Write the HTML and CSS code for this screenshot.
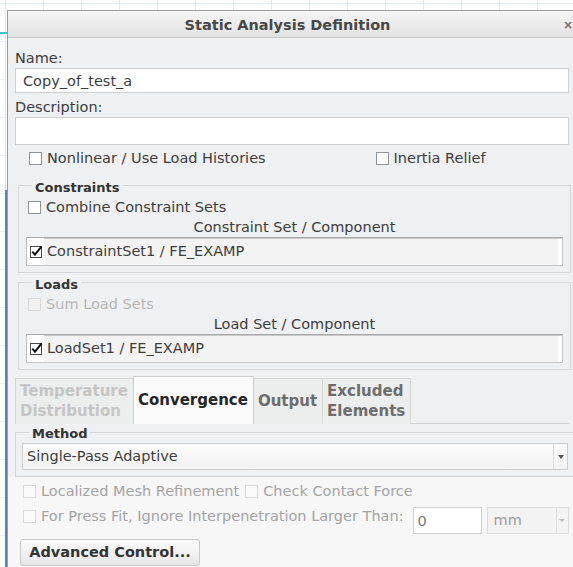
FILE: index.html
```html
<!DOCTYPE html>
<html lang="en">
<head>
<meta charset="utf-8">
<title>Static Analysis Definition</title>
<link rel="stylesheet" href="styles.css">
</head>
<body>
<div class="dialog">
  <div class="titlebar">
    <div class="title">Static Analysis Definition</div>
    <div class="close">×</div>
  </div>
  <div class="content">
    <div class="label">Name:</div>
    <div class="field name">Copy_of_test_a</div>
    <div class="label desc-label">Description:</div>
    <div class="field desc"></div>

    <div class="options">
      <div class="check first"><span class="box"></span>Nonlinear / Use Load Histories</div>
      <div class="check second"><span class="box"></span>Inertia Relief</div>
    </div>

    <fieldset class="group">
      <legend>Constraints</legend>
      <div class="check inset"><span class="box"></span>Combine Constraint Sets</div>
      <div class="list-head">Constraint Set / Component</div>
      <div class="list-row">
        <span class="cell"><svg class="tick" width="13" height="13" viewBox="0 0 13 13"><rect x="0.5" y="1.5" width="11" height="11" fill="#fff" stroke="#4a4a4a"/><path d="M2.3 6.6 L5 9.6 L11.6 1.4" fill="none" stroke="#111" stroke-width="2"/></svg></span>
        <span class="item">ConstraintSet1 / FE_EXAMP</span>
      </div>
    </fieldset>

    <fieldset class="group">
      <legend>Loads</legend>
      <div class="check inset disabled"><span class="box"></span>Sum Load Sets</div>
      <div class="list-head">Load Set / Component</div>
      <div class="list-row">
        <span class="cell"><svg class="tick" width="13" height="13" viewBox="0 0 13 13"><rect x="0.5" y="1.5" width="11" height="11" fill="#fff" stroke="#4a4a4a"/><path d="M2.3 6.6 L5 9.6 L11.6 1.4" fill="none" stroke="#111" stroke-width="2"/></svg></span>
        <span class="item">LoadSet1 / FE_EXAMP</span>
      </div>
    </fieldset>

    <div class="tabs">
      <div class="tab off">Temperature<br>Distribution</div>
      <div class="tab active">Convergence</div>
      <div class="tab">Output</div>
      <div class="tab">Excluded<br>Elements</div>
    </div>

    <fieldset class="group method">
      <legend>Method</legend>
      <div class="select">
        <span class="value">Single-Pass Adaptive</span>
        <span class="arrow"></span>
      </div>
    </fieldset>

    <div class="advanced">
      <div class="row">
        <div class="check faded"><span class="box"></span>Localized Mesh Refinement</div>
        <div class="check faded spaced"><span class="box"></span>Check Contact Force</div>
      </div>
      <div class="row second-row">
        <div class="check faded"><span class="box"></span>For Press Fit, Ignore Interpenetration Larger Than:</div>
        <div class="field num">0</div>
        <div class="select units">
          <span class="value">mm</span>
          <span class="arrow"></span>
        </div>
      </div>
      <button class="btn" type="button">Advanced Control...</button>
    </div>
  </div>
</div>
</body>
</html>
```
FILE: styles.css
```css
html, body {
  margin: 0;
  height: 100%;
  overflow: hidden;
}

body {
  font-family: "DejaVu Sans", Verdana, sans-serif;
  font-size: 14.5px;
  line-height: 17px;
  color: #3d3d3d;
  background:
    linear-gradient(#5b80bf, #5b80bf) 5px 190px / 2px 400px no-repeat,
    linear-gradient(#3cc4c4, #3cc4c4) 0 32px / 7px 2px no-repeat,
    linear-gradient(90deg, #dfe8f4 1px, transparent 1px) 5px 0 / 38px 38px,
    linear-gradient(#e7eef7 1px, transparent 1px) 0 3px / 38px 38px,
    #fff;
}

/* window frame */
.dialog {
  margin: 10px 0 0 7px;
  width: 570px;
  border: 1px solid #9b9b9b;
  background: #eff0f1;
}

.titlebar {
  display: flex;
  box-sizing: border-box;
  height: 27px;
  padding-top: 2px;
  line-height: 24px;
  background: linear-gradient(#f4f4f4, #e3e3e3);
  border-bottom: 1px solid #c8c8c8;
}

.title {
  flex: 1;
  padding-left: 4px;
  text-align: center;
  font-weight: bold;
  color: #474747;
}

.close {
  width: 10px;
  margin-right: 5px;
  color: #707070;
  font-weight: bold;
  font-size: 12px;
}

.content {
  padding: 12px 9px 0 7px;
}

/* text fields */
.label {
  height: 17px;
}

.desc-label {
  margin-top: 6px;
}

.field {
  box-sizing: border-box;
  background: #fff;
  border: 1px solid #cfcfcf;
}

.name {
  height: 25px;
  margin-top: 1px;
  padding: 4px 7px 0;
}

.desc {
  height: 28px;
  margin-top: 1px;
}

/* check boxes */
.check {
  display: flex;
  align-items: center;
  white-space: nowrap;
}

.box {
  box-sizing: border-box;
  width: 13px;
  height: 13px;
  margin-right: 5px;
  border: 1px solid #8f959c;
  background: #fff;
}

.options {
  display: grid;
  grid-template-columns: 1fr 1fr;
  margin-top: 5px;
}

.options .first {
  justify-self: start;
  padding-left: 14px;
}

.options .second {
  justify-self: center;
}

.check.inset {
  padding-left: 2px;
}

.check.disabled {
  color: #b6b6b6;
}

.check.disabled .box {
  border-color: #d9d9d9;
  background: #f1f1f1;
}

/* grouped sections */
.group {
  min-width: 0;
  margin: 9px -2px 0 3px;
  padding: 4px 7px 6px;
  border: 1px solid #d5d6d8;
}

.group + .group {
  margin-top: 0;
}

.group legend {
  margin-left: 6px;
  padding: 4px 3px 0;
  font-size: 13px;
  line-height: 15px;
  font-weight: bold;
  color: #333;
}

.list-head {
  margin-top: 3px;
  text-align: center;
}

.list-row {
  box-sizing: border-box;
  display: flex;
  height: 29px;
  margin-top: 1px;
  background: #f3f3f3;
  border: 1px solid #c6c6c6;
  border-top-color: #a9a9a9;
  border-left-color: #bcbcbc;
  box-shadow: inset 0 1px #c9c9c9, inset -4px 0 #fff;
}

.cell {
  display: flex;
  align-items: center;
  width: 17px;
  padding-left: 3px;
  box-sizing: border-box;
  background: #fff;
}

.item {
  padding-left: 3px;
  line-height: 27px;
}

/* tab strip */
.tabs {
  display: flex;
  align-items: flex-end;
  height: 48px;
  margin-top: 5px;
  border-bottom: 1px solid #d3d3d3;
}

.tab {
  display: flex;
  align-items: center;
  box-sizing: border-box;
  height: 46px;
  margin-bottom: -1px;
  padding: 0 5px 1px 4px;
  font-size: 15px;
  line-height: 20px;
  font-weight: bold;
  color: #6d6d6d;
  background: #eceded;
  border: 1px solid #d6d6d6;
  border-bottom: none;
}

.tab + .tab {
  margin-left: -1px;
}

.tab.off {
  color: #c5c5c5;
}

.tab.active {
  height: 48px;
  color: #262626;
  background: #fbfbfb;
  border-color: #cdcdcd;
  position: relative;
}

/* method box */
.group.method {
  margin: 0 -6px 0 0;
  padding: 2px 7px 6px 6px;
  border-right: none;
}

.group.method legend {
  margin-left: 7px;
  padding-top: 2px;
}

.select {
  box-sizing: border-box;
  display: flex;
  height: 27px;
  border: 1px solid #cecece;
  background: linear-gradient(#fcfcfc, #f2f2f2);
}

.select .value {
  flex: 1;
  padding-left: 4px;
  line-height: 25px;
}

.select .arrow {
  display: flex;
  align-items: center;
  justify-content: center;
  width: 13px;
  border-left: 1px solid #d8d8d8;
}

/* small down-pointing triangle */
.select .arrow::after {
  content: "";
  border-left: 3.5px solid transparent;
  border-right: 3.5px solid transparent;
  border-top: 4px solid #555;
}

/* lower options */
.advanced {
  margin: 0 -9px 0 -7px;
  padding: 6px 9px 12px 12px;
  background: #f7f7f7;
}

.row {
  display: flex;
  padding-left: 3px;
}

.check.faded {
  color: #a4a4a4;
}

.check.faded .box {
  border-color: #dadada;
  background: #fafafa;
}

.check.spaced {
  margin-left: 6px;
}

.second-row {
  align-items: flex-start;
  margin-top: 7px;
}

.second-row .check {
  padding-top: 1px;
}

.num {
  width: 69px;
  height: 27px;
  margin-left: 9px;
  padding: 1px 0 0 4px;
  line-height: 25px;
  color: #777;
  border-color: #d2d2d2;
}

.select.units {
  width: 82px;
  margin-left: 5px;
  border-color: #dcdcdc;
  background: #f3f3f3;
  color: #9b9b9b;
}

.select.units .value {
  padding-left: 6px;
}

.select.units .arrow {
  width: 11px;
  border-left-color: #e0e0e0;
}

.select.units .arrow::after {
  border-left-width: 3px;
  border-right-width: 3px;
  border-top: 3px solid #bdbdbd;
}

.btn {
  display: block;
  width: 180px;
  height: 27px;
  margin-top: 5px;
  padding: 0;
  font: bold 14.5px/25px "DejaVu Sans", Verdana, sans-serif;
  color: #333;
  background: linear-gradient(#fbfbfb, #e7e7e7);
  border: 1px solid #c8c8c8;
  border-radius: 3px;
}
```
